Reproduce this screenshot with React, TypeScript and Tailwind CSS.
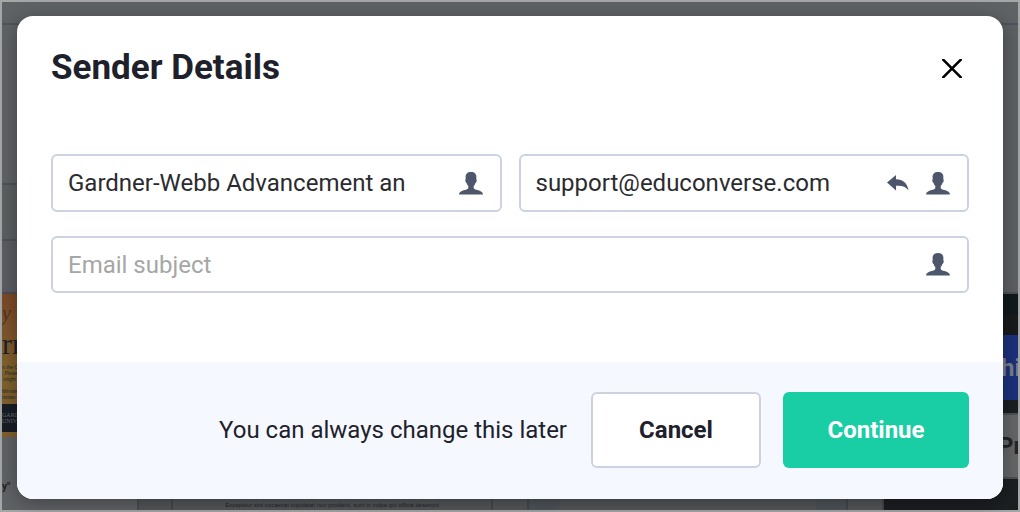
import { useState } from "react"

const FIELD = "flex min-w-0 items-center gap-[17px] rounded-md border-2 border-[#cdd2e0] bg-white pr-[17px] pl-[15px]"
const INPUT = "min-w-0 flex-1 bg-transparent text-2xl text-[#2b2b2f] outline-none placeholder:text-[#a6a6a6] placeholder:opacity-100"

function PersonIcon() {
  return (
    <svg viewBox="0 0 24 23" className="h-[23px] w-6" fill="#4d566b" aria-hidden="true">
      <path d="M12 0C8.300 0 6.500 2 6.600 5.200c0 .6.1 1.200.2 1.700-.6.2-.6 1.100-.4 2.100.2 1 .5 1.700 1.200 1.900.3 1.300.9 2.300 1.700 3.100v2c-.4 1-1.700 1.500-3.800 2.100C2.300 19.100.2 20 0 22.600h24c-.2-2.600-2.300-3.500-5.500-4.500-2.100-.6-3.400-1.100-3.800-2.100v-2c.8-.8 1.400-1.800 1.700-3.100.7-.2 1-.9 1.200-1.900.2-1 .2-1.900-.4-2.100.1-.5.200-1.100.2-1.700C17.500 2 15.700 0 12 0z" />
    </svg>
  )
}

function ReplyIcon() {
  return (
    <svg viewBox="0 0 22 16" className="h-4 w-[22px]" fill="#4d566b" aria-hidden="true">
      <path d="M0 7.500 9 0v4.300c7.200.2 11.400 4 12.600 11.200-2.500-3.700-6.200-5.300-12.600-4.700v4.700z" />
    </svg>
  )
}

function Backdrop() {
  return (
    <div className="absolute inset-0 flex flex-col overflow-hidden border-2 border-[#a5a7a7] bg-[#606366]" aria-hidden="true">
      <div className="h-[23px] shrink-0 border-b-2 border-[#50525c]" />
      <div className="flex min-h-0 flex-1">
        <div className="flex w-[137px] shrink-0 flex-col border-r-2 border-[#4b4d50]">
          <div className="h-[160px] shrink-0 border-b-2 border-[#4f515a]" />
          <div className="h-14 shrink-0 border-b-2 border-[#4f515a] bg-[#5c6062]" />
          <div className="h-[53px] shrink-0 border-b-2 border-[#4b4d50] bg-[#5a5d63]" />
          <div className="flex h-[143px] shrink-0 flex-col bg-linear-to-b from-[#7c4928] via-[#80612d] to-[#80612d] font-['Liberation_Serif',serif]">
            <span className="h-[34px] text-xl leading-[38px] text-[#493527] italic">y</span>
            <span className="h-9 text-3xl leading-8 text-[#202225]">rn</span>
            <span className="h-10 text-[5px] leading-[6px] whitespace-pre text-[#292a27] font-['Liberation_Sans',sans-serif]">{"n the C\n, Please\n might b\n\nMinister\nristian Li"}</span>
            <span className="h-7 bg-[#181d26] pt-2 text-[6px] leading-[6px] whitespace-pre text-[#696c72]">{"GARDNER\nUNIVERSITY"}</span>
          </div>
          <span className="pt-11 text-[10px] leading-3 font-bold text-[#202225]">y"</span>
        </div>
        <div className="flex min-w-0 flex-1 items-end">
          <div className="h-full w-[34px] border-r-2 border-[#47494c] bg-[#55575a]" />
          <div className="flex h-full w-[320px] items-end justify-center border-r-2 border-[#47494c] bg-[#55575a]">
            <span className="text-[6px] leading-[10px] whitespace-nowrap text-[#242629] font-['Liberation_Sans',sans-serif]">Excepteur sint occaecat cupidatat non proident, sunt in culpa qui officia deserunt</span>
          </div>
          <div className="h-full w-9 border-r-2 border-[#47494c] bg-[#55575a]" />
          <div className="h-full w-[30px] bg-[#50555a]" />
          <div className="h-full flex-1 bg-[#55575a]" />
          <div className="h-full w-8 border-r-2 border-[#47494c] bg-[#50555a]" />
          <div className="h-full w-9 border-r-2 border-[#47494c] bg-[#55575a]" />
        </div>
        <div className="flex w-[134px] shrink-0 flex-col bg-[#1c1f22]">
          <div className="h-[269px] shrink-0 border-b-2 border-[#505154] bg-[#5e6164]" />
          <div className="h-[21px] shrink-0 bg-[#101a1c]" />
          <div className="h-5 shrink-0 bg-[#181a1c]" />
          <div className="flex h-[65px] shrink-0 items-center bg-[#1b317c] pl-[117px] text-2xl font-bold text-[#7b7f8b]">hi</div>
          <div className="h-[13px] shrink-0" />
          <div className="flex h-[66px] shrink-0 items-center overflow-hidden border-y-2 border-[#505154] bg-[#646668] pl-[114px] text-2xl font-bold text-[#222529]">Pr</div>
        </div>
      </div>
    </div>
  )
}

export default function App() {
  const [name, setName] = useState("Gardner-Webb Advancement an")
  const [email, setEmail] = useState("support@educonverse.com")
  const [subject, setSubject] = useState("")

  return (
    <div className="relative min-h-screen font-['Roboto',sans-serif]">
      <Backdrop />
      <div className="relative px-[17px] pt-4 pb-3">
        <form
          role="dialog"
          aria-labelledby="dialog-title"
          className="overflow-hidden rounded-2xl bg-white shadow-[0_4px_20px_rgba(0,0,0,0.35)]"
          onSubmit={(e) => e.preventDefault()}
        >
          <header className="flex items-center justify-between px-[34px] pt-8">
            <h2 id="dialog-title" className="text-[35px] leading-10 font-bold text-[#1e212b]">Sender Details</h2>
            <button type="button" aria-label="Close" className="mr-[7px]">
              <svg viewBox="0 0 20 19" className="h-[19px] w-5" stroke="#000" strokeWidth="2.6" aria-hidden="true">
                <path d="M-1-1.500 21 20.500M21-1.500-1 20.500" />
              </svg>
            </button>
          </header>

          <div className="grid grid-cols-2 gap-x-[17px] gap-y-6 px-[34px] pt-[66px] pb-[69px]">
            <div className={`${FIELD} h-[58px]`}>
              <input aria-label="Sender name" className={INPUT} value={name} onChange={(e) => setName(e.target.value)} />
              <button type="button" aria-label="Insert name"><PersonIcon /></button>
            </div>
            <div className={`${FIELD} h-[58px]`}>
              <input aria-label="Sender email" className={INPUT} value={email} onChange={(e) => setEmail(e.target.value)} />
              <button type="button" aria-label="Reply to"><ReplyIcon /></button>
              <button type="button" aria-label="Insert email"><PersonIcon /></button>
            </div>
            <div className={`${FIELD} col-span-2 h-[57px]`}>
              <input aria-label="Email subject" className={INPUT} placeholder="Email subject" value={subject} onChange={(e) => setSubject(e.target.value)} />
              <button type="button" aria-label="Insert subject"><PersonIcon /></button>
            </div>
          </div>

          <footer className="flex items-center justify-end bg-[#f5f9ff] px-[34px] pt-[30px] pb-[31px] text-2xl">
            <p className="mr-6 text-[#1e212b]">You can always change this later</p>
            <button type="button" className="mr-[22px] h-[76px] w-[170px] rounded-md border-2 border-[#cdd2e0] bg-white font-bold text-[#1e212b]">Cancel</button>
            <button type="submit" className="h-[76px] w-[186px] rounded-md bg-[#19cda5] font-bold text-white">Continue</button>
          </footer>
        </form>
      </div>
    </div>
  )
}
